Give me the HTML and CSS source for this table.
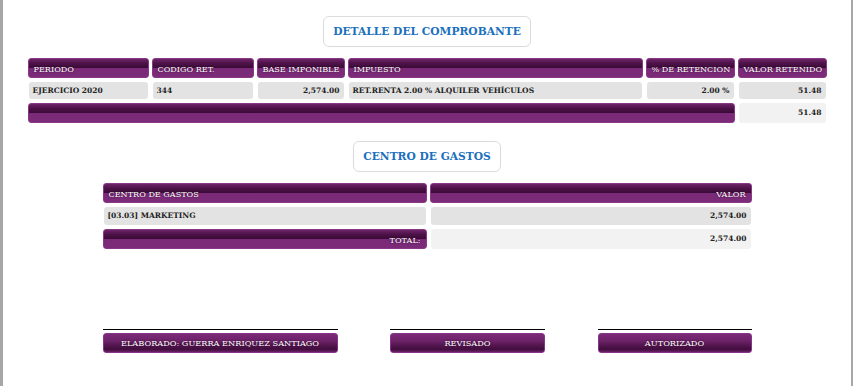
FILE: index.html
```html
<!DOCTYPE html>
<html lang="es">
<head>
<meta charset="utf-8">
<title>Detalle del comprobante</title>
<link rel="stylesheet" href="styles.css">
</head>
<body>
<div class="page">
  <div class="title-row"><div class="title">DETALLE DEL COMPROBANTE</div></div>

  <div class="grid grid-det">
    <div class="hd">PERIODO</div>
    <div class="hd">CODIGO RET.</div>
    <div class="hd">BASE IMPONIBLE</div>
    <div class="hd">IMPUESTO</div>
    <div class="hd">% DE RETENCION</div>
    <div class="hd">VALOR RETENIDO</div>

    <div class="cell">EJERCICIO 2020</div>
    <div class="cell">344</div>
    <div class="cell num">2,574.00</div>
    <div class="cell">RET.RENTA 2.00 % ALQUILER VEHÍCULOS</div>
    <div class="cell num">2.00 %</div>
    <div class="cell num">51.48</div>

    <div class="hd bar span5"></div>
    <div class="cell total num">51.48</div>
  </div>

  <div class="title-row second"><div class="title">CENTRO DE GASTOS</div></div>

  <div class="grid grid-cg">
    <div class="hd">CENTRO DE GASTOS</div>
    <div class="hd right">VALOR</div>

    <div class="cell">[03.03] MARKETING</div>
    <div class="cell num">2,574.00</div>

    <div class="hd right">TOTAL:</div>
    <div class="cell total num">2,574.00</div>
  </div>

  <div class="signs">
    <div class="sign s-wide"><div class="btn">ELABORADO: GUERRA ENRIQUEZ SANTIAGO</div></div>
    <div class="sign s-mid"><div class="btn">REVISADO</div></div>
    <div class="sign s-narrow"><div class="btn">AUTORIZADO</div></div>
  </div>
</div>
</body>
</html>
```

FILE: styles.css
```css
html, body {
  margin: 0;
  padding: 0;
  background: #ffffff;
}

body {
  font-family: "DejaVu Serif", "Liberation Serif", serif;
  color: #222222;
}

.page {
  width: 848px;
  min-height: 386px;
  border-left: 3px solid #a7a7a7;
  border-right: 2px solid #a7a7a7;
  box-sizing: content-box;
  padding-top: 16px;
}

.title-row {
  display: flex;
  justify-content: center;
}

.title-row.second {
  margin-top: 18px;
}

.title {
  height: 29px;
  line-height: 29px;
  padding: 0 9px;
  border: 1px solid #dcdcdc;
  border-radius: 6px;
  color: #1b70bd;
  font-weight: bold;
  font-size: 10.7px;
  box-shadow: 0 0 1px rgba(0,0,0,0.05);
}

.grid {
  display: grid;
  column-gap: 3px;
  row-gap: 4px;
  margin: 11px auto 0;
}

.grid-det {
  width: 799px;
  grid-template-columns: 121px 102px 88px 295px 89px 89px;
  grid-template-rows: 20px 17px 20px;
}

.grid-cg {
  width: 649px;
  grid-template-columns: 324px 322px;
  grid-template-rows: 20px 18px 20px;
}

.hd {
  box-sizing: border-box;
  border: 1px solid #8a3787;
  border-radius: 3px;
  background: linear-gradient(to bottom, #6d2467 0%, #4c1247 25%, #3b0a37 50%, #7a2a77 52%, #7c2b79 100%);
  color: #ffffff;
  font-size: 8.1px;
  line-height: 20px;
  padding: 0 5px;
  text-shadow: 0 0 2px #2a0528;
  white-space: nowrap;
  overflow: hidden;
}

.hd.right {
  text-align: right;
}

.span5 {
  grid-column: span 5;
}

.cell {
  box-sizing: border-box;
  background: #e3e3e3;
  border-radius: 3px;
  margin: 0 1px;
  padding: 0 4px;
  font-size: 7.5px;
  font-weight: bold;
  line-height: 17px;
  white-space: nowrap;
  overflow: hidden;
}

.grid-cg .cell {
  line-height: 18px;
}

.cell.num {
  text-align: right;
}

.cell.total {
  background: #f2f2f2;
  line-height: 20px;
}

.signs {
  width: 649px;
  margin: 80px auto 0;
  display: flex;
  justify-content: space-between;
}

.sign {
  border-top: 1px solid #000000;
  padding-top: 3px;
}

.s-wide { width: 235px; }
.s-mid { width: 155px; }
.s-narrow { width: 154px; }

.btn {
  box-sizing: border-box;
  height: 20px;
  border: 1px solid #87348a;
  border-radius: 3px;
  background: linear-gradient(to bottom, #7b2b78 0%, #6c2268 40%, #561751 60%, #420d3e 85%, #6a2166 100%);
  color: #ffffff;
  font-size: 8.2px;
  line-height: 18px;
  text-align: center;
  text-shadow: 0 0 2px #2a0528;
  white-space: nowrap;
}
```
